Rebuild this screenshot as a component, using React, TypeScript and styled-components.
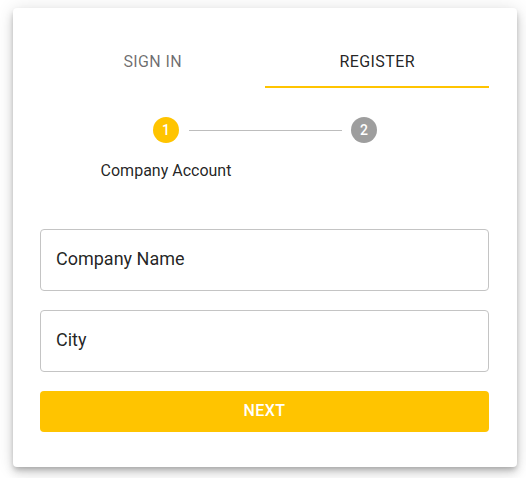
import React from "react";
import styled, { createGlobalStyle } from "styled-components";

const Global = createGlobalStyle`
  html, body { margin: 0; padding: 0; background: #ffffff; }
  body { font-family: Roboto, "Noto Sans", Arial, sans-serif; }
  * { box-sizing: border-box; }
`;

const Page = styled.div`
  width: 526px;
  height: 478px;
  padding: 8px 9px 0 13px;
`;

const Card = styled.div`
  width: 504px;
  height: 459px;
  background: #fff;
  border-radius: 4px;
  box-shadow: 0px 3px 5px -1px rgba(0,0,0,0.2), 0px 6px 10px 0px rgba(0,0,0,0.14), 0px 1px 18px 0px rgba(0,0,0,0.12);
  padding: 32px 28px 0 27px;
  display: flex;
  flex-direction: column;
`;

const Tabs = styled.div`
  display: flex;
  height: 48px;
`;

const Tab = styled.div<{ $active?: boolean }>`
  flex: 1;
  display: flex;
  align-items: center;
  justify-content: center;
  font-size: 16px;
  font-weight: 400;
  letter-spacing: 0.4px;
  text-transform: uppercase;
  color: ${p => (p.$active ? "rgba(0,0,0,0.87)" : "rgba(0,0,0,0.58)")};
  border-bottom: 2px solid ${p => (p.$active ? "#ffc400" : "transparent")};
  padding: 0 0 3px 1px;
`;

const Stepper = styled.div`
  display: flex;
  align-items: flex-start;
  padding-top: 29px;
  height: 141px;
`;

const Step = styled.div`
  display: flex;
  flex-direction: column;
  align-items: center;
  width: 150px;
  margin-left: 51px;
`;

const Circle = styled.div<{ $active?: boolean }>`
  width: 26px;
  height: 26px;
  border-radius: 50%;
  background: ${p => (p.$active ? "#ffc400" : "#9e9e9e")};
  color: #fff;
  font-size: 14px;
  font-weight: 500;
  display: flex;
  align-items: center;
  justify-content: center;
`;

const StepLabel = styled.div`
  margin-top: 18px;
  font-size: 16px;
  color: rgba(0,0,0,0.87);
  white-space: nowrap;
`;

const Connector = styled.div`
  width: 153px;
  height: 1px;
  background: #bdbdbd;
  margin: 13px 9px 0 -52px;
`;

const LastStep = styled.div`
  display: flex;
  flex-direction: column;
  align-items: center;
`;

const Field = styled.div`
  height: 62px;
  border: 1px solid #c4c4c4;
  border-radius: 4px;
  display: flex;
  align-items: center;
  padding: 0 15px 3px;
  font-size: 18px;
  color: rgba(0,0,0,0.87);
  margin-bottom: 19px;
`;

const Button = styled.button`
  height: 41px;
  border: none;
  border-radius: 4px;
  background: #ffc400;
  color: #fff;
  font-family: Roboto, sans-serif;
  font-size: 16px;
  font-weight: 500;
  letter-spacing: 0.4px;
  text-transform: uppercase;
  padding: 0 0 3px;
`;

export default function App() {
  return (
    <>
      <Global />
      <Page>
        <Card>
          <Tabs>
            <Tab>Sign in</Tab>
            <Tab $active>Register</Tab>
          </Tabs>
          <Stepper>
            <Step>
              <Circle $active>1</Circle>
              <StepLabel>Company Account</StepLabel>
            </Step>
            <Connector />
            <LastStep>
              <Circle>2</Circle>
            </LastStep>
          </Stepper>
          <Field>Company Name</Field>
          <Field>City</Field>
          <Button>Next</Button>
        </Card>
      </Page>
    </>
  );
}
